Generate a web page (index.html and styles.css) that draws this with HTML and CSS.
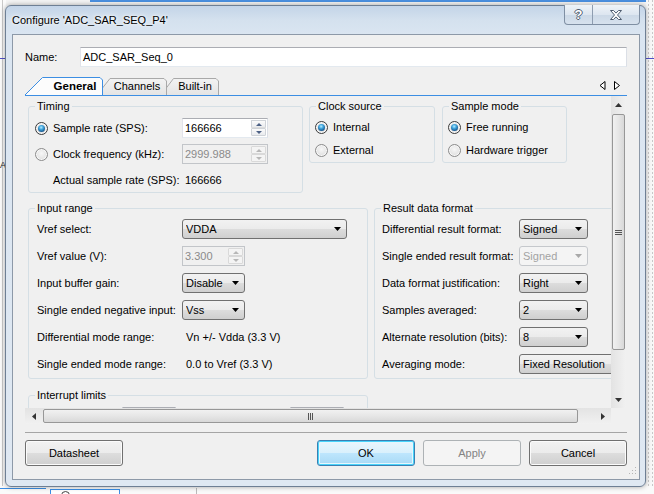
FILE: index.html
```html
<!DOCTYPE html>
<html>
<head>
<meta charset="utf-8">
<title>Configure</title>
<link rel="stylesheet" href="styles.css">
</head>
<body>
<div class="desktop">
  <div class="bg-top"></div>
  <div class="bg-left"><span class="bg-a">A</span></div>
  <div class="bg-right"></div>
  <div class="bg-bottom">
    <div class="bg-line"></div>
    <div class="bg-tab"><span class="bg-icon"></span></div>
    <div class="bg-tab2"></div>
  </div>

  <div class="window">
    <div class="titlebar">
      <span class="title">Configure 'ADC_SAR_SEQ_P4'</span>
      <div class="caption">
        <div class="cap help">?</div>
        <div class="cap close">
          <svg width="14" height="12" viewBox="0 0 14 12"><path d="M1.5 1.5h3l2.5 2.6 2.5-2.6h3l-4 4.5 4 4.5h-3l-2.5-2.6-2.5 2.6h-3l4-4.5z" fill="#fff" stroke="#4e5d70" stroke-width="1"/></svg>
        </div>
      </div>
    </div>

    <div class="client">
      <div class="name-row">
        <span class="name-label">Name:</span>
        <div class="textbox">ADC_SAR_Seq_0</div>
      </div>

      <div class="tabstrip">
        <svg class="tab-shapes" width="194" height="18" viewBox="0 0 194 18">
          <defs>
            <linearGradient id="tg" x1="0" y1="0" x2="0" y2="1">
              <stop offset="0" stop-color="#f3f3f3"/>
              <stop offset="1" stop-color="#e4e4e4"/>
            </linearGradient>
          </defs>
          <polygon points="136,18 148.5,1.5 191,1.5 193.5,4 193.5,18" fill="url(#tg)"/>
          <polyline points="136,18 148.5,1.5 191,1.5 193.5,4 193.5,18" fill="none" stroke="#a9a9a9"/>
          <polygon points="72,18 85,1.5 139,1.5 141.5,4 141.5,18" fill="url(#tg)"/>
          <polyline points="72,18 85,1.5 139,1.5 141.5,4 141.5,18" fill="none" stroke="#a9a9a9"/>
          <polygon points="0,18 17.5,0.5 75,0.5 77.5,3 77.5,18" fill="#fcfcfc"/>
          <polyline points="0,18 17.5,0.5 75,0.5 77.5,3 77.5,18" fill="none" stroke="#3c8ee3"/>
        </svg>
        <span class="tab tab-general">General</span>
        <span class="tab tab-channels">Channels</span>
        <span class="tab tab-builtin">Built-in</span>
        <svg class="tab-arrows" width="22" height="10" viewBox="0 0 22 10">
          <polygon points="6,0.5 1,4.5 6,8.5" fill="#fff" stroke="#000"/>
          <polygon points="15.5,0.5 20.5,4.5 15.5,8.5" fill="#fff" stroke="#000"/>
        </svg>
      </div>

      <div class="panel">
        <div class="viewport">
          <div class="content">
            <div class="row row-top">
              <div class="group g-timing">
                <span class="gtitle">Timing</span>
                <div class="timing-grid">
                  <div class="rlabel"><span class="radio on"></span>Sample rate (SPS):</div>
                  <div class="spin w86"><span class="spin-text">166666</span><span class="spin-btns"><span class="sb up"></span><span class="sb down"></span></span></div>
                  <div class="rlabel"><span class="radio"></span>Clock frequency (kHz):</div>
                  <div class="spin w86 disabled"><span class="spin-text">2999.988</span><span class="spin-btns"><span class="sb up"></span><span class="sb down"></span></span></div>
                  <div class="plabel">Actual sample rate (SPS):</div>
                  <div class="value">166666</div>
                </div>
              </div>
              <div class="group g-clock">
                <span class="gtitle">Clock source</span>
                <div class="radio-list">
                  <div class="rlabel"><span class="radio on"></span>Internal</div>
                  <div class="rlabel"><span class="radio"></span>External</div>
                </div>
              </div>
              <div class="group g-mode">
                <span class="gtitle">Sample mode</span>
                <div class="radio-list">
                  <div class="rlabel"><span class="radio on"></span>Free running</div>
                  <div class="rlabel"><span class="radio"></span>Hardware trigger</div>
                </div>
              </div>
            </div>

            <div class="row row-mid">
              <div class="group g-input">
                <span class="gtitle">Input range</span>
                <div class="form-grid input-grid">
                  <span>Vref select:</span>
                  <div class="combo w165"><span>VDDA</span><svg class="dd" width="7" height="4" viewBox="0 0 7 4"><polygon points="0,0 7,0 3.5,4" fill="#000"/></svg></div>
                  <span class="dis-label">Vref value (V):</span>
                  <div class="spin w63 disabled"><span class="spin-text">3.300</span><span class="spin-btns"><span class="sb up"></span><span class="sb down"></span></span></div>
                  <span>Input buffer gain:</span>
                  <div class="combo w63"><span>Disable</span><svg class="dd" width="7" height="4" viewBox="0 0 7 4"><polygon points="0,0 7,0 3.5,4" fill="#000"/></svg></div>
                  <span>Single ended negative input:</span>
                  <div class="combo w63"><span>Vss</span><svg class="dd" width="7" height="4" viewBox="0 0 7 4"><polygon points="0,0 7,0 3.5,4" fill="#000"/></svg></div>
                  <span>Differential mode range:</span>
                  <span class="value">Vn +/- Vdda (3.3 V)</span>
                  <span>Single ended mode range:</span>
                  <span class="value">0.0 to Vref (3.3 V)</span>
                </div>
              </div>
              <div class="group g-result">
                <span class="gtitle">Result data format</span>
                <div class="form-grid result-grid">
                  <span>Differential result format:</span>
                  <div class="combo w69"><span>Signed</span><svg class="dd" width="7" height="4" viewBox="0 0 7 4"><polygon points="0,0 7,0 3.5,4" fill="#000"/></svg></div>
                  <span>Single ended result format:</span>
                  <div class="combo w69 disabled"><span>Signed</span><svg class="dd" width="7" height="4" viewBox="0 0 7 4"><polygon points="0,0 7,0 3.5,4" fill="#a8a8a8"/></svg></div>
                  <span>Data format justification:</span>
                  <div class="combo w69"><span>Right</span><svg class="dd" width="7" height="4" viewBox="0 0 7 4"><polygon points="0,0 7,0 3.5,4" fill="#000"/></svg></div>
                  <span>Samples averaged:</span>
                  <div class="combo w69"><span>2</span><svg class="dd" width="7" height="4" viewBox="0 0 7 4"><polygon points="0,0 7,0 3.5,4" fill="#000"/></svg></div>
                  <span>Alternate resolution (bits):</span>
                  <div class="combo w69"><span>8</span><svg class="dd" width="7" height="4" viewBox="0 0 7 4"><polygon points="0,0 7,0 3.5,4" fill="#000"/></svg></div>
                  <span>Averaging mode:</span>
                  <div class="combo w101"><span>Fixed Resolution</span><svg class="dd" width="7" height="4" viewBox="0 0 7 4"><polygon points="0,0 7,0 3.5,4" fill="#000"/></svg></div>
                </div>
              </div>
            </div>

            <div class="row row-bot">
              <div class="group g-interrupt">
                <span class="gtitle">Interrupt limits</span>
                <div class="limit-row">
                  <div class="textbox small b1"></div>
                  <div class="textbox small b2"></div>
                </div>
              </div>
            </div>
          </div>
        </div>

        <div class="vscroll">
          <div class="sbtn"><svg width="7" height="4" viewBox="0 0 7 4"><polygon points="0,4 7,4 3.5,0" fill="#333"/></svg></div>
          <div class="vtrack">
            <div class="vthumb"><span class="vgrip"></span></div>
          </div>
          <div class="sbtn"><svg width="7" height="4" viewBox="0 0 7 4"><polygon points="0,0 7,0 3.5,4" fill="#333"/></svg></div>
        </div>

        <div class="hscroll">
          <div class="sbtn"><svg width="4" height="7" viewBox="0 0 4 7"><polygon points="4,0 4,7 0,3.5" fill="#333"/></svg></div>
          <div class="htrack">
            <div class="hthumb"><span class="hgrip"></span></div>
          </div>
          <div class="sbtn"><svg width="4" height="7" viewBox="0 0 4 7"><polygon points="0,0 0,7 4,3.5" fill="#333"/></svg></div>
        </div>
        <div class="corner"></div>
      </div>

      <div class="separator"></div>

      <div class="buttons">
        <div class="btn">Datasheet</div>
        <div class="btn-group">
          <div class="btn default">OK</div>
          <div class="btn disabled">Apply</div>
          <div class="btn">Cancel</div>
        </div>
      </div>

      <svg class="grip" width="10" height="10" viewBox="0 0 10 10">
        <g fill="#b5b5b5">
          <rect x="8" y="0" width="1" height="1"/>
          <rect x="5" y="3" width="1" height="1"/><rect x="8" y="3" width="1" height="1"/>
          <rect x="2" y="6" width="1" height="1"/><rect x="5" y="6" width="1" height="1"/><rect x="8" y="6" width="1" height="1"/>
        </g>
      </svg>
    </div>
  </div>
</div>
</body>
</html>
```

FILE: styles.css
```css
* { box-sizing: border-box; }
html, body { margin: 0; padding: 0; }
body {
  font-family: "Liberation Sans", Arial, sans-serif;
  font-size: 11px;
  color: #000;
  background: #fff;
}

.desktop {
  position: relative;
  width: 654px;
  height: 494px;
  overflow: hidden;
  background: #f4f4f4;
}

/* background application bits */
.bg-top {
  position: absolute; left: 90px; top: 0; width: 564px; height: 2px;
  background: #4a8fe0;
}
.bg-left {
  position: absolute; left: 0; top: 0; width: 6px; height: 494px;
  background: #fbfbfb;
}
.bg-left::before {
  content: ""; position: absolute; left: 2px; top: 0; width: 1px; height: 100%; background: #c9c9c9;
}
.bg-left::after {
  content: ""; position: absolute; left: 0; top: 58px; width: 6px; height: 1px; background: #5050c8;
}
.bg-a { position: absolute; left: 0; top: 160px; font-size: 9px; line-height: 10px; color: #222; }
.bg-right {
  position: absolute; right: 0; top: 0; width: 8px; height: 494px;
  background:
    linear-gradient(#5050c8, #5050c8) 0 58px / 8px 1px no-repeat,
    repeating-linear-gradient(180deg, #c8c8c8 0 2px, transparent 2px 4px) 2px 0 / 1px 100% no-repeat,
    repeating-linear-gradient(180deg, #c8c8c8 0 2px, transparent 2px 4px) 6px 0 / 1px 100% no-repeat,
    #f8f8f8;
}
.bg-bottom {
  position: absolute; left: 0; top: 486px; width: 654px; height: 8px;
  background: #fafafa;
}
.bg-line { position: absolute; left: 0; top: 2px; width: 46px; height: 1px; background: #3a8ee6; }
.bg-tab {
  position: absolute; left: 50px; top: 3px; width: 70px; height: 8px;
  border: 1px solid #3a8ee6; border-bottom: 0; background: #fff;
}
.bg-icon {
  position: absolute; left: 10px; top: 1px; width: 9px; height: 9px; border-radius: 50%;
  border: 1px solid #444;
}
.bg-tab2 { position: absolute; left: 196px; top: 2px; width: 1px; height: 6px; background: #bbb; }

/* window */
.window {
  position: absolute;
  left: 5px; top: 5px;
  width: 641px; height: 482px;
  border: 1px solid #6e7f94;
  border-radius: 6px;
  background: linear-gradient(180deg, #c3d4e8 0px, #d4e1ee 14px, #dae5f1 28px, #dfe8f2 100%);
  padding: 0 5px 6px 6px;
  box-shadow: 0 0 5px rgba(0, 0, 0, 0.35);
  display: flex;
  flex-direction: column;
}

.titlebar {
  height: 28px;
  display: flex;
  align-items: flex-start;
}
.title {
  padding-top: 8px;
  line-height: 13px;
  font-size: 11px;
  color: #000;
  text-shadow: 0 0 6px #fff, 0 0 3px #fff;
}
.caption {
  margin-left: auto;
  margin-top: -1px;
  display: flex;
  height: 20px;
  border: 1px solid #7f8fa3;
  border-top: 0;
  border-radius: 0 0 4px 4px;
  overflow: hidden;
  background: linear-gradient(180deg, #eef3f8 0%, #dde6f0 50%, #cbd8e6 51%, #d7e2ee 100%);
}
.cap {
  display: flex; align-items: center; justify-content: center;
  height: 100%;
}
.help {
  width: 28px;
  border-right: 1px solid #8e9db0;
  font-weight: bold;
  font-size: 13px;
  color: #fff;
  text-shadow: -1px 0 #4e5d70, 1px 0 #4e5d70, 0 -1px #4e5d70, 0 1px #4e5d70;
}
.close { width: 46px; }

/* client area */
.client {
  position: relative;
  height: 446px;
  border: 1px solid #8d99a8;
  background: #f0f0f0;
  padding: 12px 12px 0 12px;
  display: flex;
  flex-direction: column;
}

.name-row {
  display: flex;
  align-items: center;
  height: 20px;
}
.name-label { width: 55px; }
.textbox {
  flex: 1;
  height: 20px;
  border: 1px solid;
  border-color: #abadb3 #dbdfe6 #e3e9ef #e2e3ea;
  background: #fff;
  padding-left: 2px;
  line-height: 18px;
}

.tabstrip {
  position: relative;
  margin-top: 10px;
  height: 19px;
  border-bottom: 1px solid #3c8ee3;
  display: flex;
}
.tab-shapes { position: absolute; left: 0; top: 0; }
.tab {
  position: relative;
  line-height: 17px;
  padding-top: 1px;
  text-align: center;
  white-space: nowrap;
}
.tab-general { margin-left: 23px; width: 54px; font-weight: bold; font-size: 11.5px; }
.tab-channels { margin-left: 8px; width: 54px; }
.tab-builtin { margin-left: 9px; width: 44px; }
.tab-arrows { position: absolute; right: 6px; top: 4px; }

/* panel with scroll area */
.panel {
  display: grid;
  grid-template-columns: 586px 15px;
  grid-template-rows: 312px 16px;
}
.viewport {
  overflow: hidden;
  position: relative;
}
.content {
  padding: 10px 0 0 3px;
  width: 700px;
}
.row { display: flex; align-items: flex-start; }
.row-top { gap: 6px; }
.row-top .g-mode { margin-left: 1px; }
.row-mid { margin-top: 15px; gap: 6px; }
.row-bot { margin-top: 16px; }

.group {
  position: relative;
  border: 1px solid #d5dfe5;
  border-radius: 3px;
  flex: none;
}
.gtitle {
  position: absolute;
  left: 6px;
  top: -7px;
  padding: 0 2px;
  line-height: 13px;
  background: #f0f0f0;
  white-space: nowrap;
}

.g-timing { width: 275px; height: 87px; padding: 11px 0 0 6px; }
.g-clock { width: 126px; height: 57px; padding: 11px 0 0 5px; }
.g-mode { width: 125px; height: 57px; padding: 11px 0 0 5px; }
.g-input { width: 340px; height: 171px; padding: 10px 0 0 8px; }
.g-result { width: 272px; height: 171px; padding: 10px 0 0 7px; }
.g-interrupt { width: 340px; height: 40px; padding: 11px 0 0 0; }

.timing-grid {
  display: grid;
  grid-template-columns: 147px 86px;
  grid-auto-rows: 20px;
  row-gap: 6px;
  align-items: center;
}
.radio-list {
  display: flex;
  flex-direction: column;
  gap: 5px;
}
.radio-list .rlabel { height: 18px; }

.rlabel {
  display: flex;
  align-items: center;
  gap: 5px;
  white-space: nowrap;
}
.plabel { padding-left: 18px; white-space: nowrap; }
.value { padding-left: 3px; white-space: nowrap; }

.radio {
  position: relative;
  width: 13px;
  height: 13px;
  border-radius: 50%;
  border: 1px solid #8b8b8b;
  background: radial-gradient(circle at 50% 40%, #f7f7f7 0%, #e4e4e4 60%, #d2d2d2 100%);
  box-shadow: inset 0 0 0 1px #f8f8f8;
  flex: none;
}
.radio.on { border-color: #3a3a3a; }
.radio.on::after {
  content: "";
  position: absolute;
  left: 2px; top: 2px; width: 7px; height: 7px;
  border-radius: 50%;
  background: radial-gradient(circle at 45% 35%, #b5ecff 0%, #3fa4dc 35%, #17558c 75%, #0d3660 100%);
}

/* spin box */
.spin {
  display: flex;
  height: 20px;
  border: 1px solid;
  border-color: #abadb3 #dbdfe6 #e3e9ef #e2e3ea;
  background: #fff;
}
.spin.w86 { width: 86px; }
.spin.w63 { width: 63px; }
.spin-text {
  flex: 1;
  padding-left: 2px;
  line-height: 18px;
  white-space: nowrap;
  overflow: hidden;
}
.spin-btns {
  width: 16px;
  display: flex;
  flex-direction: column;
  padding: 1px 1px 1px 0;
}
.sb {
  flex: 1;
  position: relative;
  border: 1px solid #cfd3d8;
  border-radius: 1px;
  background: linear-gradient(180deg, #fbfbfb, #e9ebee);
}
.sb.up { border-bottom-color: #dcdcdc; }
.sb::after {
  content: "";
  position: absolute;
  left: 4px; top: 2px;
  border-left: 3px solid transparent;
  border-right: 3px solid transparent;
}
.sb.up::after { border-bottom: 3px solid #4d6185; }
.sb.down::after { border-top: 3px solid #4d6185; top: 2px; }
.spin.disabled { background: #f0f0f0; border-color: #c2c5c9; color: #8a8a8a; }
.spin.disabled .sb { background: #f4f4f4; border-color: #d9d9d9; }
.spin.disabled .sb.up::after { border-bottom-color: #b7b7b7; }
.spin.disabled .sb.down::after { border-top-color: #b7b7b7; }

/* forms */
.form-grid {
  display: grid;
  grid-auto-rows: 20px;
  row-gap: 7px;
  align-items: center;
  white-space: nowrap;
}
.input-grid { grid-template-columns: 145px auto; justify-items: start; }
.result-grid { grid-template-columns: 137px auto; justify-items: start; }
.form-grid .value { padding-left: 4px; }
.dis-label { color: #000; }

.combo {
  display: flex;
  align-items: center;
  height: 20px;
  border: 1px solid #707070;
  border-radius: 3px;
  background: linear-gradient(180deg, #f2f2f2 0%, #ebebeb 50%, #dddddd 50%, #cfcfcf 100%);
  padding: 0 5px 0 3px;
  white-space: nowrap;
}
.combo span { flex: 1; overflow: hidden; }
.combo .dd { flex: none; margin-left: 2px; }
.combo.w165 { width: 165px; }
.combo.w63 { width: 63px; }
.combo.w69 { width: 69px; }
.combo.w101 { width: 101px; }
.combo.w101 span { flex: none; width: 86px; }
.combo.disabled {
  border-color: #c5c8cc;
  background: #f4f4f4;
  color: #a3a3a3;
}

.limit-row { display: flex; }
.textbox.small { flex: none; width: 54px; height: 20px; }
.textbox.b1 { margin-left: 93px; }
.textbox.b2 { margin-left: 114px; }

/* scrollbars */
.vscroll {
  display: flex;
  flex-direction: column;
  background: linear-gradient(90deg, #e3e3e3, #f1f1f1);
}
.sbtn {
  flex: none;
  display: flex;
  align-items: center;
  justify-content: center;
}
.vscroll .sbtn { height: 17px; }
.vtrack { flex: 1; padding-top: 1px; }
.vthumb {
  margin: 0 1px;
  height: 236px;
  border: 1px solid #979797;
  border-radius: 2px;
  background: linear-gradient(90deg, #f1f1f1 0%, #e6e6e6 50%, #d8d8d8 100%);
  display: flex;
  align-items: center;
  justify-content: center;
}
.vgrip {
  width: 7px;
  height: 5px;
  background: repeating-linear-gradient(180deg, #555 0 1px, transparent 1px 2px);
}
.hscroll {
  display: flex;
  background: linear-gradient(180deg, #e3e3e3, #f1f1f1);
}
.hscroll .sbtn { width: 17px; }
.htrack { flex: 1; padding-left: 1px; display: flex; align-items: stretch; padding-top: 1px; padding-bottom: 1px; }
.hthumb {
  width: 535px;
  border: 1px solid #979797;
  border-radius: 2px;
  background: linear-gradient(180deg, #f1f1f1 0%, #e6e6e6 50%, #d8d8d8 100%);
  display: flex;
  align-items: center;
  justify-content: center;
}
.hgrip {
  width: 5px;
  height: 7px;
  background: repeating-linear-gradient(90deg, #555 0 1px, transparent 1px 2px);
}
.corner { background: #f0f0f0; }

.separator {
  margin-top: 8px;
  height: 1px;
  background: #a5a5a5;
}

.buttons {
  margin-top: 7px;
  display: flex;
  justify-content: space-between;
}
.btn-group { display: flex; gap: 8px; }
.btn {
  width: 98px;
  height: 26px;
  border: 1px solid #707070;
  border-radius: 3px;
  background: linear-gradient(180deg, #f2f2f2 0%, #ebebeb 50%, #dddddd 50%, #cfcfcf 100%);
  box-shadow: inset 0 0 0 1px #fbfbfb;
  display: flex;
  align-items: center;
  justify-content: center;
}
.btn.default {
  border-color: #3c7fb1;
  background: linear-gradient(180deg, #eaf6fd 0%, #d9f0fc 50%, #bee6fd 50%, #a7d9f5 100%);
  box-shadow: inset 0 0 0 1px #48d4fb, inset 0 0 0 2px #e6f6fd;
}
.btn.disabled {
  border-color: #adb2b5;
  background: #f4f4f4;
  box-shadow: none;
  color: #838383;
}

.grip { position: absolute; right: 2px; bottom: 2px; }
```
